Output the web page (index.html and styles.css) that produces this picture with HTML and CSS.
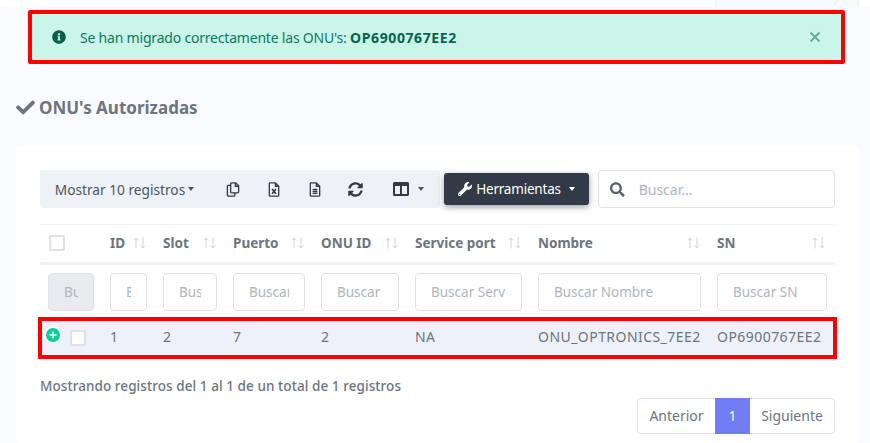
FILE: index.html
```html
<!DOCTYPE html>
<html lang="es">
<head>
    <meta charset="UTF-8">
    <title>ONU's Autorizadas</title>
    <link rel="stylesheet" href="styles.css">
</head>
<body>
    <div class="topbar">
        <div class="topbar-tab"></div>
    </div>

    <div class="alert-mark">
        <div class="alert">
            <svg class="alert-icon" viewBox="0 0 512 512"><path d="M256 8C119.043 8 8 119.083 8 256c0 136.997 111.043 248 248 248s248-111.003 248-248C504 119.083 392.957 8 256 8zm0 110c23.196 0 42 18.804 42 42s-18.804 42-42 42-42-18.804-42-42 18.804-42 42-42zm56 254c0 6.627-5.373 12-12 12h-88c-6.627 0-12-5.373-12-12v-24c0-6.627 5.373-12 12-12h12v-64h-12c-6.627 0-12-5.373-12-12v-24c0-6.627 5.373-12 12-12h64c6.627 0 12 5.373 12 12v100h12c6.627 0 12 5.373 12 12v24z"/></svg>
            <span class="alert-text">Se han migrado correctamente las ONU's: <b>OP6900767EE2</b></span>
            <svg class="alert-close" viewBox="0 0 12 12"><path d="M1.5 1.5l9 9M10.5 1.5l-9 9"/></svg>
        </div>
    </div>

    <h2 class="page-title">
        <svg class="title-icon" viewBox="0 0 512 512"><path d="M173.898 439.404l-166.4-166.4c-9.997-9.997-9.997-26.206 0-36.204l36.203-36.204c9.997-9.998 26.207-9.998 36.204 0L192 312.69 432.095 72.596c9.997-9.997 26.207-9.997 36.204 0l36.203 36.204c9.997 9.997 9.997 26.206 0 36.204l-294.4 294.401c-9.998 9.997-26.207 9.997-36.204-.001z"/></svg>
        ONU's Autorizadas
    </h2>

    <div class="card">
        <div class="toolbar">
            <div class="btn-group">
                <span class="tool tool-length">Mostrar 10 registros<i class="caret"></i></span>
                <span class="tool tool-icon">
                    <svg class="line-icon" viewBox="0 0 14 16"><path d="M4.5 3.5H2a1 1 0 0 0-1 1V14a1 1 0 0 0 1 1h6a1 1 0 0 0 1-1v-2.5"/><path d="M4.5 2a1 1 0 0 1 1-1H10l3 3v6.5a1 1 0 0 1-1 1H5.5a1 1 0 0 1-1-1z"/><path d="M9.5 1v3.5H13"/></svg>
                </span>
                <span class="tool tool-icon">
                    <svg class="line-icon" viewBox="0 0 12 16"><path d="M1.5 1H7.5L11 4.5V14a1 1 0 0 1-1 1H2a1 1 0 0 1-1-1V1.5z"/><path d="M7.5 1v3.5H11"/><path class="thick" d="M4 7.5l4 5M8 7.5l-4 5"/></svg>
                </span>
                <span class="tool tool-icon">
                    <svg class="line-icon" viewBox="0 0 12 16"><path d="M1.5 1H7.5L11 4.5V14a1 1 0 0 1-1 1H2a1 1 0 0 1-1-1V1.5z"/><path d="M7.5 1v3.5H11"/><path d="M3.5 8h5M3.5 10h5M3.5 12h5"/></svg>
                </span>
                <span class="tool tool-icon">
                    <svg class="fill-icon icon-sync" viewBox="0 0 512 512"><path d="M370.72 133.28C339.458 104.008 298.888 87.962 255.848 88c-77.458.068-144.328 53.178-162.791 126.85-1.344 5.363-6.122 9.15-11.651 9.15H24.103c-7.498 0-13.194-6.807-11.807-14.176C33.933 94.924 134.813 8 256 8c66.448 0 126.791 26.136 171.315 68.685L463.03 40.97C478.149 25.851 504 36.559 504 57.941V192c0 13.255-10.745 24-24 24H345.941c-21.382 0-32.09-25.851-16.971-40.971l41.75-41.749zM32 296h134.059c21.382 0 32.09 25.851 16.971 40.971l-41.75 41.75c31.262 29.273 71.835 45.319 114.876 45.28 77.418-.07 144.315-53.144 162.787-126.849 1.344-5.363 6.122-9.15 11.651-9.15h57.304c7.498 0 13.194 6.807 11.807 14.176C478.067 417.076 377.187 504 256 504c-66.448 0-126.791-26.136-171.315-68.685L48.97 471.03C33.851 486.149 8 475.441 8 454.059V320c0-13.255 10.745-24 24-24z"/></svg>
                </span>
                <span class="tool tool-columns">
                    <svg class="fill-icon icon-columns" viewBox="0 0 512 512"><path d="M464 32H48C21.49 32 0 53.49 0 80v352c0 26.51 21.49 48 48 48h416c26.51 0 48-21.49 48-48V80c0-26.51-21.49-48-48-48zM224 416H64V160h160v256zm224 0H288V160h160v256z"/></svg>
                    <i class="caret"></i>
                </span>
            </div>
            <button class="btn-tools">
                <svg class="wrench" viewBox="0 0 512 512"><path d="M507.73 109.1c-2.24-9.03-13.54-12.09-20.12-5.51l-74.36 74.36-67.88-11.31-11.31-67.88 74.36-74.36c6.62-6.62 3.43-17.9-5.66-20.16-47.38-11.74-99.55.91-136.58 37.93-39.64 39.64-50.55 97.1-34.05 147.2L18.74 402.76c-24.99 24.99-24.99 65.51 0 90.5 24.99 24.99 65.51 24.99 90.5 0l213.21-213.21c50.12 16.71 107.47 5.68 147.37-34.22 37.07-37.07 49.7-89.32 37.91-136.73zM64 472c-13.25 0-24-10.75-24-24 0-13.26 10.75-24 24-24s24 10.74 24 24c0 13.25-10.75 24-24 24z"/></svg>
                Herramientas<i class="caret"></i>
            </button>
            <div class="search-box">
                <svg class="search-icon" viewBox="0 0 512 512"><path d="M505 442.7L405.3 343c-4.5-4.5-10.6-7-17-7H372c27.6-35.3 44-79.7 44-128C416 93.1 322.9 0 208 0S0 93.1 0 208s93.1 208 208 208c48.3 0 92.7-16.4 128-44v16.3c0 6.4 2.5 12.5 7 17l99.7 99.7c9.4 9.4 24.6 9.4 33.9 0l28.3-28.3c9.4-9.4 9.4-24.6.1-34zM208 336c-70.7 0-128-57.2-128-128 0-70.7 57.2-128 128-128 70.7 0 128 57.2 128 128 0 70.7-57.2 128-128 128z"/></svg>
                <input class="search-input" type="text" placeholder="Buscar...">
            </div>
        </div>

        <table class="grid">
            <colgroup>
                <col class="c-check"><col class="c-id"><col class="c-slot"><col class="c-puerto"><col class="c-onu"><col class="c-service"><col class="c-nombre"><col class="c-sn">
            </colgroup>
            <thead>
                <tr class="head-row">
                    <th class="check-cell"><span class="checkbox"></span></th>
                    <th><div class="th-in">ID<svg class="sort" viewBox="0 0 13 12"><path d="M3 11.5V1M.8 3.4L3 1l2.2 2.4M10 .5V11M7.8 8.6L10 11l2.2-2.4"/></svg></div></th>
                    <th><div class="th-in">Slot<svg class="sort" viewBox="0 0 13 12"><path d="M3 11.5V1M.8 3.4L3 1l2.2 2.4M10 .5V11M7.8 8.6L10 11l2.2-2.4"/></svg></div></th>
                    <th><div class="th-in">Puerto<svg class="sort" viewBox="0 0 13 12"><path d="M3 11.5V1M.8 3.4L3 1l2.2 2.4M10 .5V11M7.8 8.6L10 11l2.2-2.4"/></svg></div></th>
                    <th><div class="th-in">ONU ID<svg class="sort" viewBox="0 0 13 12"><path d="M3 11.5V1M.8 3.4L3 1l2.2 2.4M10 .5V11M7.8 8.6L10 11l2.2-2.4"/></svg></div></th>
                    <th><div class="th-in">Service port<svg class="sort" viewBox="0 0 13 12"><path d="M3 11.5V1M.8 3.4L3 1l2.2 2.4M10 .5V11M7.8 8.6L10 11l2.2-2.4"/></svg></div></th>
                    <th><div class="th-in">Nombre<svg class="sort" viewBox="0 0 13 12"><path d="M3 11.5V1M.8 3.4L3 1l2.2 2.4M10 .5V11M7.8 8.6L10 11l2.2-2.4"/></svg></div></th>
                    <th class="last"><div class="th-in">SN<svg class="sort" viewBox="0 0 13 12"><path d="M3 11.5V1M.8 3.4L3 1l2.2 2.4M10 .5V11M7.8 8.6L10 11l2.2-2.4"/></svg></div></th>
                </tr>
                <tr class="filter-row">
                    <td class="check-cell"><input class="filter filter-off" type="text" placeholder="Buscar" disabled></td>
                    <td><input class="filter" type="text" placeholder="Buscar ID"></td>
                    <td><input class="filter" type="text" placeholder="Buscar Slot"></td>
                    <td><input class="filter" type="text" placeholder="Buscar Puerto"></td>
                    <td><input class="filter" type="text" placeholder="Buscar ONU ID"></td>
                    <td><input class="filter" type="text" placeholder="Buscar Service port"></td>
                    <td><input class="filter" type="text" placeholder="Buscar Nombre"></td>
                    <td class="last"><input class="filter" type="text" placeholder="Buscar SN"></td>
                </tr>
            </thead>
            <tbody>
                <tr class="data-row">
                    <td class="row-check">
                        <svg class="expand" viewBox="0 0 18 18"><circle cx="9" cy="9" r="8" fill="#0acf97" stroke="#fff" stroke-width="2"/><path d="M9 5.4v7.2M5.4 9h7.2" stroke="#fff" stroke-width="1.5"/></svg>
                        <span class="checkbox"></span>
                    </td>
                    <td>1</td>
                    <td>2</td>
                    <td>7</td>
                    <td>2</td>
                    <td>NA</td>
                    <td>ONU_OPTRONICS_7EE2</td>
                    <td class="last">OP6900767EE2</td>
                </tr>
            </tbody>
        </table>

        <p class="table-info">Mostrando registros del 1 al 1 de un total de 1 registros</p>

        <div class="pager">
            <a class="page page-prev">Anterior</a>
            <a class="page page-on">1</a>
            <a class="page page-next">Siguiente</a>
        </div>
    </div>
</body>
</html>
```

FILE: styles.css
```css
:root {
    --page-bg: #fafbfe;
    --text: #6c757d;
    --strip: #eef2f7;
    --line: #dee2e6;
    --dark: #313a46;
    --mark: #ff0000;
}

html, body {
    height: 443px;
    overflow: hidden;
}

body {
    margin: 0;
    background-color: var(--page-bg);
    color: var(--text);
    font-family: "Noto Sans", "Open Sans", Arial, sans-serif;
    font-size: 14px;
}

/* top strip, cut off in the shot */
.topbar {
    height: 7px;
    background-color: #fff;
    display: flex;
    padding-left: 715px;
}

.topbar-tab {
    width: 142px;
    background-color: #f8f9fd;
    border-left: 1px solid #eef0f5;
    border-right: 1px solid #eef0f5;
}

.alert-mark {
    margin: 3px 25px 0 28px;
    border: 4px solid var(--mark);
    border-radius: 2px;
}

.alert {
    height: 46px;
    box-sizing: border-box;
    display: flex;
    align-items: center;
    padding: 0 20px;
    background-color: #caf5e8;
    color: #0b7a62;
    font-size: 14px;
}

.alert-icon {
    width: 14px;
    height: 14px;
    fill: #0a5f4a;
    margin-right: 14px;
}

.alert-text {
    flex-grow: 1;
    letter-spacing: -0.2px;
}

.alert-text b {
    font-weight: 700;
    letter-spacing: 0.6px;
    color: #066350;
}

.alert-close {
    width: 12px;
    height: 12px;
    fill: none;
    stroke: #63ad9b;
    stroke-width: 2;
}

.page-title {
    margin: 31px 0 0 16px;
    height: 24px;
    display: flex;
    align-items: center;
    gap: 4px;
    font-size: 17px;
    font-weight: 700;
    color: #6c757d;
}

.title-icon {
    width: 19px;
    height: 19px;
    fill: #6c757d;
}

.card {
    margin: 27px 11px 0 16px;
    height: 297px;
    box-sizing: border-box;
    padding: 24px 24px 0;
    background-color: #fff;
    border-radius: 4px;
}

.toolbar {
    display: flex;
    align-items: center;
}

.btn-group {
    display: flex;
    align-items: center;
    width: 400px;
    height: 38px;
    background-color: var(--strip);
    border-radius: 3px;
    color: #4b5560;
}

.tool {
    display: flex;
    align-items: center;
    justify-content: center;
    height: 100%;
}

.tool-length {
    width: 172px;
    padding-right: 3px;
    box-sizing: border-box;
    font-size: 13.7px;
}

.tool-icon {
    width: 41px;
}

.tool-columns {
    width: 64px;
    gap: 9px;
}

.caret {
    display: inline-block;
    margin-left: 3px;
    border-top: 4px solid currentColor;
    border-left: 3.5px solid transparent;
    border-right: 3.5px solid transparent;
}

.tool-columns .caret {
    margin-left: 0;
}

.line-icon {
    height: 15px;
    width: 14px;
    fill: none;
    stroke: #313a46;
    stroke-width: 1.4;
}

.line-icon .thick {
    stroke-width: 1.7;
}

.fill-icon {
    fill: #313a46;
}

.icon-sync {
    width: 15px;
    height: 15px;
}

.icon-columns {
    width: 16px;
    height: 16px;
}

.btn-tools {
    width: 145px;
    height: 32px;
    margin-left: 4px;
    padding: 0;
    display: flex;
    align-items: center;
    justify-content: center;
    gap: 4px;
    background-color: var(--dark);
    color: #fff;
    border: none;
    border-radius: 3px;
    box-shadow: 0 2px 6px rgba(49, 58, 70, 0.5);
    font-family: inherit;
    font-size: 13.5px;
    letter-spacing: -0.2px;
}

.btn-tools .caret {
    margin-left: 4px;
}

.wrench {
    width: 14px;
    height: 14px;
    fill: #fff;
}

.search-box {
    width: 237px;
    height: 38px;
    box-sizing: border-box;
    margin-left: 9px;
    display: flex;
    align-items: center;
    padding-left: 11px;
    border: 1px solid var(--line);
    border-radius: 4px;
}

.search-icon {
    width: 15px;
    height: 15px;
    fill: #56616d;
    margin-right: 14px;
}

.search-input {
    flex-grow: 1;
    min-width: 0;
    border: none;
    outline: none;
    padding: 0;
    font-family: inherit;
    font-size: 14px;
}

.search-input::placeholder,
.filter::placeholder {
    color: #adb5bd;
    opacity: 1;
}

.grid {
    width: 795px;
    margin-top: 16px;
    border-collapse: collapse;
    table-layout: fixed;
}

.c-check { width: 58px; }
.c-id { width: 53px; }
.c-slot { width: 70px; }
.c-puerto { width: 88px; }
.c-onu { width: 94px; }
.c-service { width: 123px; }
.c-nombre { width: 179px; }
.c-sn { width: 130px; }

.head-row {
    height: 39px;
    border-top: 1px solid var(--strip);
    border-bottom: 3px solid var(--strip);
}

.head-row th {
    padding: 0 5px 2px 12px;
    text-align: left;
    font-weight: 700;
    font-size: 13.5px;
    color: #6c757d;
}

.head-row th.last {
    padding-right: 10px;
}

.head-row th.check-cell {
    padding-left: 9px;
}

.th-in {
    display: flex;
    justify-content: space-between;
    align-items: center;
    white-space: nowrap;
}

.sort {
    flex-shrink: 0;
    width: 13px;
    height: 12px;
    fill: none;
    stroke: #ced4da;
    stroke-width: 1;
}

.checkbox {
    display: block;
    width: 16px;
    height: 16px;
    box-sizing: border-box;
    background-color: #fff;
    border: 2px solid #dee2e6;
    border-radius: 2px;
}

.filter-row {
    height: 55px;
}

.filter-row td {
    padding: 0 4px 0 12px;
}

.filter-row td.check-cell {
    padding-left: 8px;
}

.filter-row td.last {
    padding-right: 8px;
}

.filter {
    display: block;
    width: 100%;
    height: 38px;
    box-sizing: border-box;
    padding: 0 15px;
    border: 1px solid var(--line);
    border-radius: 4px;
    background-color: #fff;
    font-family: inherit;
    font-size: 13.5px;
}

.filter-off {
    background-color: #e9ecef;
}

.data-row {
    height: 38px;
    background-color: #eef1f9;
    outline: 4px solid var(--mark);
    outline-offset: -2px;
    font-size: 14px;
    letter-spacing: 0.45px;
}

.data-row td {
    padding: 0 0 2px 12px;
    white-space: nowrap;
}

.data-row td.row-check {
    position: relative;
    padding: 0 0 0 30px;
}

.expand {
    position: absolute;
    left: 4px;
    top: 7px;
    width: 18px;
    height: 18px;
}

.table-info {
    margin: 20px 0 0;
    font-size: 13.5px;
    font-weight: 500;
    line-height: 18px;
    letter-spacing: 0.07px;
}

.pager {
    display: flex;
    justify-content: flex-end;
    margin-top: 3px;
}

.page {
    height: 36px;
    box-sizing: border-box;
    display: flex;
    align-items: center;
    justify-content: center;
    background-color: #fff;
    border: 1px solid var(--line);
    font-size: 14px;
}

.page-prev {
    width: 78px;
    border-right: none;
    border-radius: 4px 0 0 4px;
}

.page-on {
    width: 35px;
    background-color: #727cf5;
    border-color: #727cf5;
    color: #fff;
}

.page-next {
    width: 85px;
    border-left: none;
    border-radius: 0 4px 4px 0;
}
```
